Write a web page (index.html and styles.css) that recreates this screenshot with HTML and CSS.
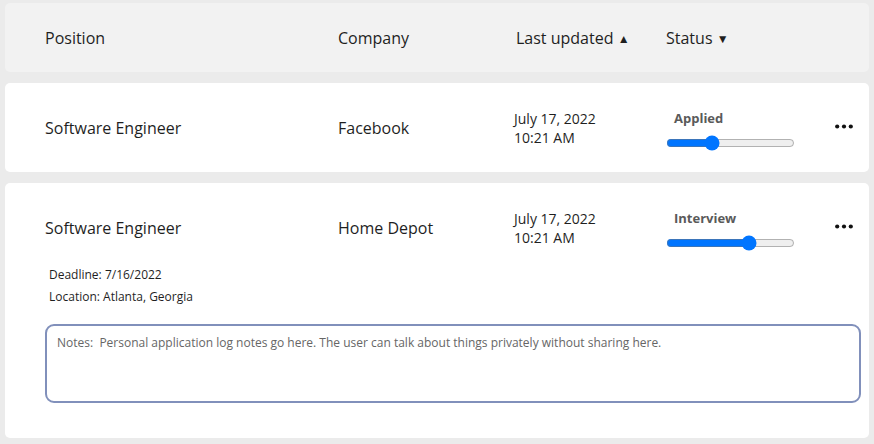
FILE: index.html
```html
<!DOCTYPE html>
<html lang="en">
<head>
<meta charset="utf-8">
<title>Applications</title>
<link rel="stylesheet" href="styles.css">
</head>
<body>
<div class="list">
  <div class="card head">
    <div class="grid">
      <div class="c-pos">Position</div>
      <div class="c-co">Company</div>
      <div class="c-date hd">Last updated <span class="arrow">&#9650;</span></div>
      <div class="c-status hs">Status <span class="arrow">&#9660;</span></div>
    </div>
  </div>

  <div class="card">
    <div class="grid main">
      <div class="c-pos">Software Engineer</div>
      <div class="c-co">Facebook</div>
      <div class="c-date date">July 17, 2022<br>10:21 AM</div>
      <div class="c-status status">
        <div class="label">Applied</div>
        <input class="slider" type="range" min="0" max="3" value="1">
      </div>
      <div class="c-more"><svg width="18" height="5" viewBox="0 0 18 5"><circle cx="2.2" cy="2.5" r="2.1"/><circle cx="9" cy="2.5" r="2.1"/><circle cx="15.8" cy="2.5" r="2.1"/></svg></div>
    </div>
  </div>

  <div class="card open">
    <div class="grid main">
      <div class="c-pos">Software Engineer</div>
      <div class="c-co">Home Depot</div>
      <div class="c-date date">July 17, 2022<br>10:21 AM</div>
      <div class="c-status status">
        <div class="label">Interview</div>
        <input class="slider" type="range" min="0" max="3" value="2">
      </div>
      <div class="c-more"><svg width="18" height="5" viewBox="0 0 18 5"><circle cx="2.2" cy="2.5" r="2.1"/><circle cx="9" cy="2.5" r="2.1"/><circle cx="15.8" cy="2.5" r="2.1"/></svg></div>
    </div>
    <div class="details">
      <div>Deadline: 7/16/2022</div>
      <div>Location: Atlanta, Georgia</div>
    </div>
    <div class="notes">Notes:&nbsp; Personal application log notes go here. The user can talk about things privately without sharing here.</div>
  </div>
</div>
</body>
</html>
```

FILE: styles.css
```css
html, body {
  margin: 0;
  padding: 0;
}
body {
  background: #ebebeb;
  font-family: "Open Sans", "Noto Sans", sans-serif;
  color: #1f1f1f;
}
.list {
  display: flex;
  flex-direction: column;
  gap: 11px;
  padding: 3px 5px 6px 5px;
}
.card {
  background: #ffffff;
  border-radius: 5px;
}
.card.head {
  background: #f2f2f2;
  height: 69px;
  display: flex;
  align-items: center;
}
.grid {
  display: grid;
  grid-template-columns: 293px 176px 151px 170px 30px;
  padding-left: 40px;
  align-items: center;
  font-size: 16px;
  width: 100%;
  box-sizing: border-box;
}
.card.head .grid {
  padding-top: 1px;
}
.hd { padding-left: 2px; }
.hs { padding-left: 1px; }
.arrow {
  font-size: 12px;
  position: relative;
  top: -1px;
}
.main {
  height: 89px;
}
.card.open .main {
  height: 81px;
  padding-top: 8px;
}
.date {
  font-size: 14px;
  line-height: 19px;
  padding-top: 1px;
}
.status {
  display: flex;
  flex-direction: column;
  padding-top: 5px;
  padding-left: 1px;
}
.label {
  font-size: 13px;
  font-weight: 700;
  color: #5a5a5a;
  line-height: 18px;
  padding-left: 8px;
}
.slider {
  width: 129px;
  height: 16px;
  margin: 8px 0 0 0;
  accent-color: #0075ff;
}
.c-more {
  display: flex;
  align-items: center;
  height: 10px;
  margin-top: -3px;
}
.c-more svg {
  fill: #111;
}
.details {
  padding-left: 44px;
  font-size: 12px;
  line-height: 22px;
  color: #1f1f1f;
}
.notes {
  margin: 16px 8px 35px 40px;
  height: 79px;
  box-sizing: border-box;
  border: 2px solid #8190bb;
  border-radius: 9px;
  padding: 9px 10px;
  font-size: 12px;
  line-height: 16px;
  color: #666666;
}
```
